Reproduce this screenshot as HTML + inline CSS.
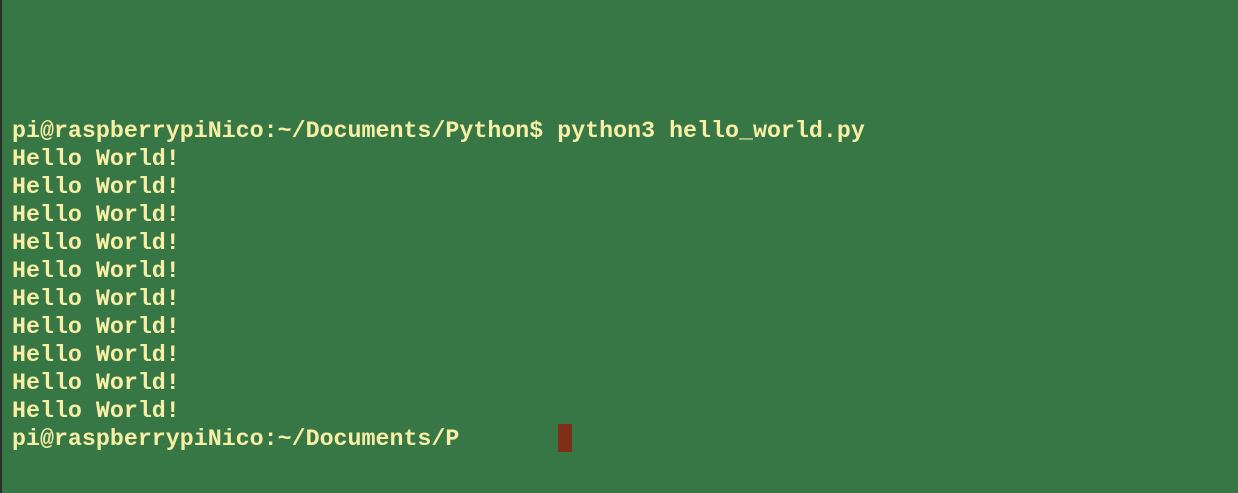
<!DOCTYPE html>
<html><head><style>
html,body{margin:0;padding:0;}
body{width:1238px;height:493px;background:#377745;position:relative;overflow:hidden;}
.edge{position:absolute;left:0;top:0;width:2px;height:493px;background:#2a2f2c;}
pre{position:absolute;left:12px;top:117px;margin:0;font-family:"Liberation Mono",monospace;font-weight:bold;font-size:23.3px;line-height:28px;color:#f8efa6;letter-spacing:0;}
.cur{position:absolute;left:558px;top:424px;width:14px;height:28px;background:#7d2f18;}
</style></head><body>
<div class="edge"></div>
<pre>pi@raspberrypiNico:~/Documents/Python$ python3 hello_world.py
Hello World!
Hello World!
Hello World!
Hello World!
Hello World!
Hello World!
Hello World!
Hello World!
Hello World!
Hello World!
pi@raspberrypiNico:~/Documents/P</pre>
<div class="cur"></div>
</body></html>
